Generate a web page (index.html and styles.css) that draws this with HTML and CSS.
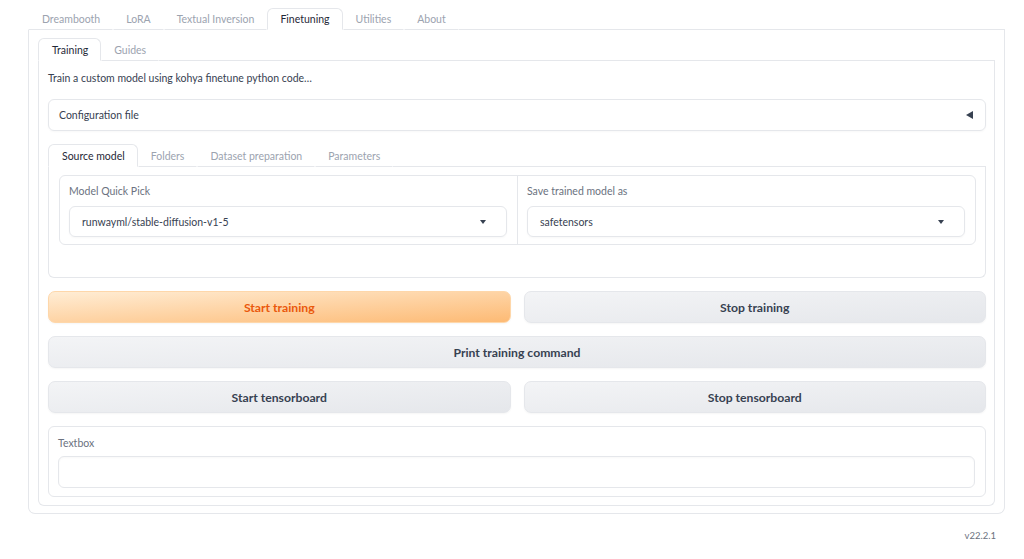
FILE: index.html
```html
<!DOCTYPE html>
<html>
<head>
<meta charset="utf-8">
<link rel="stylesheet" href="styles.css">
</head>
<body>
<div class="app">
  <div class="tabbar top">
    <div class="tab">Dreambooth</div>
    <div class="tab">LoRA</div>
    <div class="tab">Textual Inversion</div>
    <div class="tab active">Finetuning</div>
    <div class="tab">Utilities</div>
    <div class="tab">About</div>
    <div class="fill"></div>
  </div>
  <div class="outer">
    <div class="tabbar">
      <div class="tab active">Training</div>
      <div class="tab">Guides</div>
      <div class="fill"></div>
    </div>
    <div class="panel">
      <div class="desc">Train a custom model using kohya finetune python code…</div>
      <div class="accordion">
        <span>Configuration file</span>
        <span class="tri-left"></span>
      </div>
      <div class="subtabs">
        <div class="tabbar">
          <div class="tab active">Source model</div>
          <div class="tab">Folders</div>
          <div class="tab">Dataset preparation</div>
          <div class="tab">Parameters</div>
          <div class="fill"></div>
        </div>
        <div class="subpanel">
          <div class="block row">
            <div class="field">
              <div class="label">Model Quick Pick</div>
              <div class="dropdown"><span>runwayml/stable-diffusion-v1-5</span><span class="tri-down"></span></div>
            </div>
            <div class="field sep">
              <div class="label">Save trained model as</div>
              <div class="dropdown"><span>safetensors</span><span class="tri-down"></span></div>
            </div>
          </div>
        </div>
      </div>
      <div class="btnrow">
        <button class="btn primary">Start training</button>
        <button class="btn">Stop training</button>
      </div>
      <div class="btnrow">
        <button class="btn">Print training command</button>
      </div>
      <div class="btnrow">
        <button class="btn">Start tensorboard</button>
        <button class="btn">Stop tensorboard</button>
      </div>
      <div class="block textblock">
        <div class="label">Textbox</div>
        <div class="input"></div>
      </div>
    </div>
  </div>
  <div class="footer">v22.2.1</div>
</div>
</body>
</html>
```
FILE: styles.css
```css
* { box-sizing: border-box; }
body {
  margin: 0;
  background: #ffffff;
  font-family: "Lato", "Liberation Sans", sans-serif;
  font-size: 10.5px;
  color: #374151;
}
.app {
  padding: 8px 19px 0 28px;
}
.tabbar {
  display: flex;
  align-items: stretch;
  height: 23px;
}
.tabbar.top { height: 22px; }
.tab {
  padding: 0 12px;
  display: flex;
  align-items: center;
  color: #9ca3af;
  border: 1px solid transparent;
  border-bottom: 1px solid #e5e7eb;
  border-radius: 6px 6px 0 0;
  white-space: nowrap;
}
.tab:first-child { padding-left: 13px; }
.tab.active {
  color: #1f2937;
  border-color: #e5e7eb;
  border-bottom-color: transparent;
  background: #fff;
}
.fill {
  flex: 1;
  border-bottom: 1px solid #e5e7eb;
}
.outer {
  border: 1px solid #e5e7eb;
  border-top: none;
  border-radius: 0 0 7px 7px;
  padding: 8px 9px 7px 9px;
}
.panel {
  border: 1px solid #e5e7eb;
  border-top: none;
  border-radius: 0 0 6px 6px;
  padding: 9px 8px 8px 9px;
  display: flex;
  flex-direction: column;
  gap: 13px;
}
.desc {
  line-height: 16px;
  color: #374151;
}
.accordion {
  height: 32px;
  border: 1px solid #e5e7eb;
  border-radius: 6px;
  padding: 0 12px 0 10px;
  display: flex;
  align-items: center;
  justify-content: space-between;
  color: #374151;
  box-shadow: 0 1px 2px rgba(0,0,0,0.03);
}
.tri-left {
  width: 0; height: 0;
  border-top: 4px solid transparent;
  border-bottom: 4px solid transparent;
  border-right: 7px solid #374151;
}
.tri-down {
  width: 0; height: 0;
  border-left: 3.5px solid transparent;
  border-right: 3.5px solid transparent;
  border-top: 4px solid #374151;
}
.subpanel {
  border: 1px solid #e5e7eb;
  border-top: none;
  border-radius: 0 0 6px 6px;
  padding: 8px 9px 32px 10px;
}
.block {
  border: 1px solid #e5e7eb;
  border-radius: 6px;
  background: #fff;
}
.row {
  display: flex;
}
.field {
  flex: 1;
  padding: 8px 10px 7px 9px;
  display: flex;
  flex-direction: column;
  gap: 8px;
}
.field.sep {
  border-left: 1px solid #e5e7eb;
}
.label {
  color: #6b7280;
  line-height: 14px;
}
.dropdown {
  height: 31px;
  border: 1px solid #e5e7eb;
  border-radius: 6px;
  display: flex;
  align-items: center;
  justify-content: space-between;
  padding: 0 20px 0 12px;
  color: #374151;
  box-shadow: 0 1px 2px rgba(0,0,0,0.03);
}
.btnrow {
  display: flex;
  gap: 13px;
}
.btn {
  flex: 1;
  height: 32px;
  border: 1px solid #e5e7eb;
  border-radius: 7px;
  font-family: inherit;
  font-size: 12.2px;
  font-weight: 700;
  color: #374151;
  background: linear-gradient(to bottom right, #f3f4f6, #e5e7eb);
  box-shadow: 0 1px 2px rgba(0,0,0,0.04);
}
.btn.primary {
  color: #ea580c;
  border-color: #fed7aa;
  background: linear-gradient(to bottom right, #ffedd5, #fdba74);
}
.textblock {
  padding: 9px 10px 8px 9px;
  display: flex;
  flex-direction: column;
  gap: 6px;
}
.input {
  height: 32px;
  border: 1px solid #e5e7eb;
  border-radius: 6px;
  box-shadow: inset 0 1px 2px rgba(0,0,0,0.03);
}
.footer {
  text-align: right;
  font-size: 9.5px;
  color: #6b7280;
  padding: 16px 9px 0 0;
}
```
